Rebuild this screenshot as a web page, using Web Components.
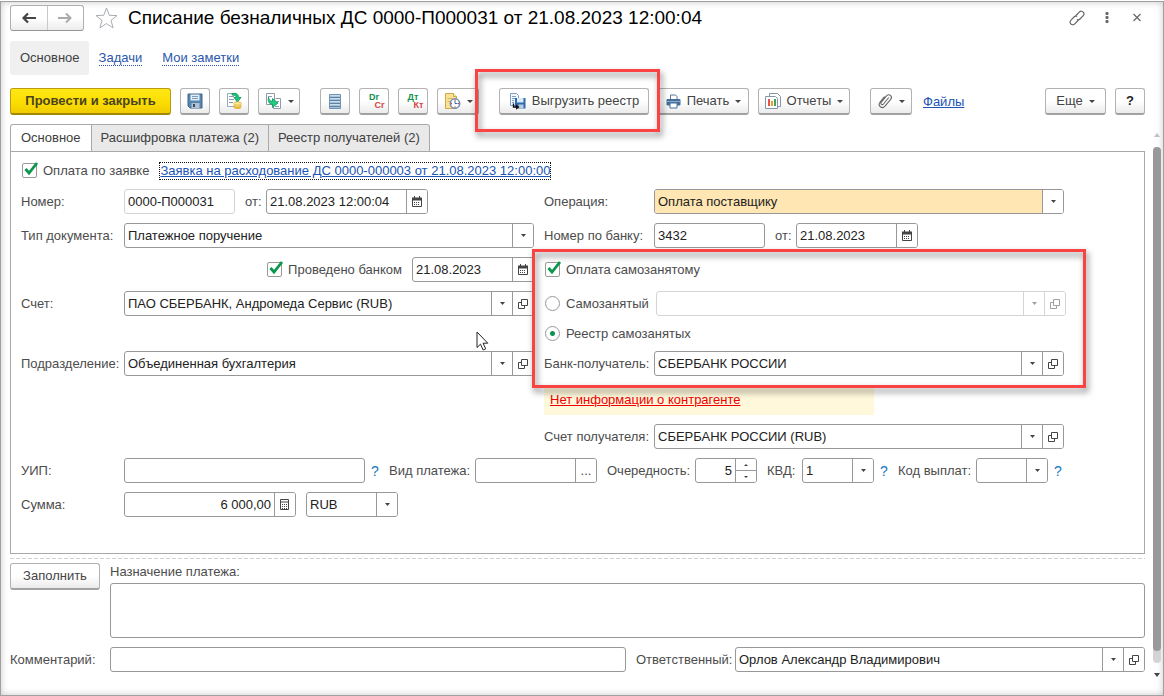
<!DOCTYPE html>
<html lang="ru">
<head>
<meta charset="utf-8">
<title>Списание безналичных ДС</title>
<style>
body{margin:0;font:13px/16px "Liberation Sans",Arial,sans-serif;color:#4c4c4c;background:#fff}
</style>
</head>
<body>
<doc-window></doc-window>

<template id="t-doc-window">
<style>
:host{display:flex;flex-direction:column;box-sizing:border-box;min-height:100vh;border-top:1px solid #fff}
.win{flex:1;display:flex;flex-direction:column;border:1px solid #a0a0a0;box-shadow:inset 0 0 7px rgba(0,0,0,.22);padding:3px 2px 0 9px}
.body{display:flex;gap:8px;margin-top:9px;flex:1}
.main{flex:1;min-width:0}
doc-header,nav-links,command-bar{margin-right:16px}
nav-links{margin-top:10px}
command-bar{margin-top:13px}
</style>
<div class="win">
<doc-header></doc-header>
<nav-links></nav-links>
<command-bar></command-bar>
<div class="body">
<div class="main"><tab-strip></tab-strip><payment-form></payment-form><doc-footer></doc-footer></div>
<scroll-rail></scroll-rail>
</div>
</div>
</template>

<template id="t-doc-header">
<style>
:host{display:flex;align-items:center;height:26px}
.nav{display:flex;box-sizing:border-box;width:74px;height:26px;border:1px solid #b0b0b0;border-bottom-color:#959595;border-radius:3px;background:linear-gradient(#fff 50%,#ececec)}
.nav button{flex:1;border:0;background:none;padding:0;display:flex;align-items:center;justify-content:center}
.nav button+button{border-left:1px solid #c8c8c8}
.star{margin:0 9px 0 10px;width:25px;height:25px}
.star svg,.tools svg{display:block}
h1{margin:0;flex:1;font-size:19px;line-height:24px;font-weight:400;color:#000;white-space:nowrap}
.tools{display:flex;align-items:center;gap:14px}
button.t{border:0;background:none;padding:0;width:16px;height:20px}
</style>
<div class="nav">
<button aria-label="Назад"><svg width="16" height="12" viewBox="0 0 16 12"><path d="M7 1.500 2.500 6 7 10.500M2.500 6H15" fill="none" stroke="#454545" stroke-width="2.200"/></svg></button>
<button aria-label="Вперед"><svg width="16" height="12" viewBox="0 0 16 12"><path d="M9 1.500 13.500 6 9 10.500M13.500 6H1" fill="none" stroke="#ababab" stroke-width="2"/></svg></button>
</div>
<div class="star"><svg width="25" height="25" viewBox="0 0 25 25"><path d="M12.500 2l2.800 7.300 7.700.3-6 4.800 2.100 7.500-6.600-4.300-6.600 4.300 2.100-7.500-6-4.800 7.700-.3z" fill="#fff" stroke="#a8adb3" stroke-width="1"/></svg></div>
<h1>Списание безналичных ДС 0000-П000031 от 21.08.2023 12:00:04</h1>
<div class="tools">
<button class="t" aria-label="Ссылка"><svg width="16" height="18" viewBox="0 0 16 18"><g fill="none" stroke="#666" stroke-width="1.200" stroke-linecap="round"><path d="M7 6.500l3.200-3.300c1.400-1.400 3-1.200 4 0 1 1.100.9 2.600-.2 3.700l-3 3.100c-.8.8-1.700 1-2.600.7"/><path d="M9 11.500l-3.200 3.300c-1.400 1.400-3 1.200-4 0-1-1.100-.9-2.600.2-3.700l3-3.100c.8-.8 1.700-1 2.600-.7"/></g></svg></button>
<button class="t" aria-label="Меню"><svg width="16" height="18" viewBox="0 0 16 18"><g fill="#666"><rect x="6.500" y="3" width="3" height="3" rx="1"/><rect x="6.500" y="7" width="3" height="3" rx="1"/><rect x="6.500" y="11" width="3" height="3" rx="1"/></g></svg></button>
<button class="t" aria-label="Закрыть"><svg width="16" height="18" viewBox="0 0 16 18"><path d="M4.500 5l7 7m0-7l-7 7" stroke="#666" stroke-width="1.200"/></svg></button>
</div>
</template>

<template id="t-nav-links">
<style>
:host{display:flex;align-items:center;height:34px}
.cur{box-sizing:border-box;height:34px;padding:9px 9px 9px 10px;background:#f0f0f0;border-radius:3px;color:#404040}
a{color:#2a57ac;text-decoration:none;border-bottom:1px dotted #2a57ac;line-height:14px;margin-left:10px}
a+a{margin-left:20px}
</style>
<span class="cur">Основное</span><a href="#tasks">Задачи</a><a href="#notes">Мои заметки</a>
</template>

<template id="t-command-bar">
<style>
:host{display:flex;align-items:center;gap:9px;height:27px}
.sp{width:2px;flex:none}
.grow{flex:1}
svg{display:block}
.hl{position:relative}
a{color:#2055b5;text-decoration:underline;margin-left:2px}
callout-frame{inset:-19px -11px -17px -24px}
</style>
<cmd-button primary wide="161">Провести и закрыть</cmd-button>
<cmd-button wide="30" label="Записать"><svg width="16" height="16" viewBox="0 0 16 16"><path d="M1 1h14v14H3l-2-2z" fill="#5585b3" stroke="#3e6489"/><path d="M3.500 1.500h9v6h-9z" fill="#e4edf5"/><path d="M5 3.500h6M5 5.500h6" stroke="#7c9cbc"/><path d="M4.500 10h8v5h-8z" fill="#b4c2cf"/><path d="M6 11h2v3H6z" fill="#2f4c69"/></svg></cmd-button>
<cmd-button wide="30" label="Провести"><svg width="16" height="18" viewBox="0 0 16 18"><path d="M1.500 1.500h9v13h-9z" fill="#fff" stroke="#9ba9b6"/><path d="M3 4.500h5M3 7.500h5M3 10.500h4" stroke="#8499ab"/><path d="M6 1.500c4-.7 6.500.5 6.800 4H15L11.500 10 8 5.500h2.200C10 4 9 3 6 3z" fill="#1fc77c" stroke="#109358" stroke-width=".8"/><ellipse cx="11.500" cy="15" rx="3.800" ry="2" fill="#e8b93c"/><ellipse cx="11.500" cy="13.500" rx="3.800" ry="1.700" fill="#f8df76" stroke="#d9a62e" stroke-width=".7"/><ellipse cx="11.500" cy="11.500" rx="3.800" ry="1.700" fill="#fdeb94" stroke="#d9a62e" stroke-width=".7"/></svg></cmd-button>
<cmd-button wide="42" drop label="Создать на основании"><svg width="17" height="18" viewBox="0 0 17 18"><path d="M1.500 1.500h8v11h-8zM10.500 6.500h5v10h-7v-4" fill="#fff" stroke="#8d9baa"/><path d="M3 4.500h4M10 14.500h4M12 9.500h2" stroke="#8da0b2"/><path d="M3.500 5c.3 3 1.500 4.200 4 4.200V6.500L13 11l-5.500 4.500v-3C4.500 12.500 2.500 9.500 3.500 5z" fill="#22c980" stroke="#0c9357" stroke-width=".8"/></svg></cmd-button>
<i class="sp"></i>
<cmd-button wide="30" label="Реестр"><svg width="12" height="15" viewBox="0 0 12 15"><path d="M.5.500h11v14H.5z" fill="#a9c4da" stroke="#6f93b1"/><path d="M1 3.500h10M1 6.500h10M1 9.500h10M1 12.500h10" stroke="#5c82a3"/><path d="M1 1.500h10M1 4.500h10M1 7.500h10M1 10.500h10" stroke="#c9dcea"/></svg></cmd-button>
<cmd-button wide="30" label="Проводки"><pair-glyph a="Dr" b="Cr"></pair-glyph></cmd-button>
<cmd-button wide="30" label="Движения"><pair-glyph a="Дт" b="Кт"></pair-glyph></cmd-button>
<cmd-button wide="42" drop label="История"><svg width="17" height="16" viewBox="0 0 17 16"><path d="M1.500.5h8l3 3v12h-11z" fill="#fbe294" stroke="#cfa748"/><path d="M9.500.5v3h3" fill="#fff5cf" stroke="#cfa748"/><path d="M3.500 5.500h5M3.500 8.500h3" stroke="#d8b45a"/><circle cx="11" cy="10.500" r="4.700" fill="#fff" stroke="#668fbd" stroke-width="1.500"/><path d="M11 7.500v3h2.500" fill="none" stroke="#3b6ba2"/><path d="M11 6.500v1M11 13.500v1M7 10.500h1M14 10.500h1" stroke="#e03c3c" stroke-width="1.300"/></svg></cmd-button>
<i class="sp"></i>
<div class="hl">
<cmd-button wide="150"><svg slot="icon" width="17" height="17" viewBox="0 0 17 17"><path d="M1.500.500h6l2 2v10h-8z" fill="#f3f8fd" stroke="#7f9dc2"/><path d="M3 3.500h4M3 5.500h3M3 7.500h2M3 9.500h2" stroke="#7f9dc2"/><path d="M6 5h10.500v10.500H8L6 14z" fill="#2e69ac"/><path d="M8 5h6.500v4.500H8z" fill="#d9ebfa"/><path d="M9.500 11.500h5v4h-5z" fill="#b8cbdd"/><path d="M4.500 10.500v3.500h3" fill="none" stroke="#111" stroke-width="1.400"/><path d="M7 11.500l3.500 2.500L7 16.700z" fill="#111"/></svg>Выгрузить реестр</cmd-button>
<callout-frame></callout-frame>
</div>
<cmd-button wide="91" drop><svg slot="icon" width="15" height="15" viewBox="0 0 15 15"><path d="M4.500 5V1h5l1.500 1.500V5" fill="#fff" stroke="#5a7896"/><rect x=".5" y="5" width="14" height="6.500" rx="1" fill="#446f9b"/><path d="M1 7.500h13" stroke="#89abc9"/><path d="M4 9h7v5H4z" fill="#fff" stroke="#446f9b"/></svg>Печать</cmd-button>
<cmd-button wide="92" drop><svg slot="icon" width="16" height="17" viewBox="0 0 16 17"><path d="M4.500.500h8l3 3v10h-11z" fill="#fff" stroke="#8397a9"/><path d="M.5 3.500h10l2 2v10H.5z" fill="#fff" stroke="#8397a9"/><path d="M3 6h2v7H3z" fill="#e35548"/><path d="M6 8h2v5H6z" fill="#e79c35"/><path d="M9 6h2v7H9z" fill="#3fa358"/></svg>Отчеты</cmd-button>
<i class="sp"></i>
<cmd-button wide="42" drop label="Присоединенные файлы"><svg width="15" height="16" viewBox="0 0 15 16"><path d="M10.800 4.500L5.500 11c-.6.700-1.600.7-2.200.2-.6-.6-.6-1.400 0-2.100L8.500 2.800c1-1.200 2.700-1.400 3.900-.4 1.200 1 1.300 2.700.3 3.900L7 13.200c-1.300 1.500-3.300 1.600-4.600.6C1 12.600.9 10.500 2.100 9L6.600 3.700" fill="none" stroke="#666" stroke-width="1.100"/></svg></cmd-button>
<a href="#files">Файлы</a>
<i class="grow"></i>
<cmd-button wide="61" drop>Еще</cmd-button>
<cmd-button wide="30" label="Справка" strong>?</cmd-button>
</template>

<template id="t-pair-glyph">
<style>
:host{display:flex;flex-direction:column;width:21px;font:700 9px/8px "Liberation Sans",Arial,sans-serif}
.a{color:#12924f}
.b{align-self:flex-end;color:#d64545}
</style>
<span class="a"></span><span class="b"></span>
</template>

<template id="t-cmd-button">
<style>
:host{display:block;flex:none}
button{font:inherit;color:#444;box-sizing:border-box;width:100%;height:27px;padding:0;display:flex;align-items:center;justify-content:center;gap:6px;border:1px solid #b3b3b3;border-bottom:2px solid #a2a2a2;border-radius:3px;background:linear-gradient(#fff 50%,#ebebeb);white-space:nowrap}
:host([primary]) button{font-weight:700;color:#4a4320;background:linear-gradient(#ffe817,#fbdc00 60%,#efcb00);border-color:#b89d10;border-bottom-color:#a08800}
:host([strong]) button{font-weight:700;color:#222}
::slotted(svg){display:block}
.d{display:none;border:3px solid transparent;border-top-color:#444;border-bottom:0}
:host([drop]) .d{display:block}
</style>
<button><slot name="icon"></slot><slot></slot><span class="d"></span></button>
</template>

<template id="t-callout-frame">
<style>
:host{position:absolute;pointer-events:none;border:3px solid #fc4343;filter:drop-shadow(2px 4px 3px rgba(0,0,0,.5))}
</style>
</template>

<template id="t-tab-strip">
<style>
:host{display:flex;height:28px;position:relative;margin-bottom:-1px}
button{font:inherit;color:#404040;box-sizing:border-box;border:1px solid #a9a9a9;border-left-width:0;background:#e9e9e9;padding:0 9px;height:28px;white-space:nowrap}
button:first-of-type{background:#fff;border-left-width:1px;border-bottom-color:#fff;border-radius:3px 0 0 0;padding:0 10px}
button:last-of-type{border-radius:0 3px 0 0}
</style>
<button>Основное</button><button>Расшифровка платежа (2)</button><button>Реестр получателей (2)</button>
</template>

<template id="t-form-field">
<style>
:host{display:flex;align-items:center;min-width:0;height:25px}
label{flex:none;width:var(--lw,auto);white-space:nowrap;color:#4c4c4c}
.box{flex:1;min-width:0;display:grid;grid-template-columns:minmax(0,1fr);grid-auto-flow:column;box-sizing:border-box;height:25px;border:1px solid #989898;border-radius:3px;background:#fff;overflow:hidden}
input,select{grid-row:1;grid-column:1;box-sizing:border-box;appearance:none;font:inherit;color:#222;opacity:1;border:0;outline:0;background:var(--bg,transparent);padding:0 3px;margin:0;width:100%;height:23px;border-radius:0;min-width:0}
.num input{text-align:right}
.pick select{grid-column:1/3;padding-right:24px}
.cell{grid-row:1;box-sizing:border-box;width:21px;height:23px;border:0;border-left:1px solid #989898;background:#fff;padding:0;display:flex;align-items:center;justify-content:center;color:#444;font:inherit}
.pick .arrow{grid-column:2;pointer-events:none}
.cell svg{display:block}
.spin{flex-direction:column}
.spin i{flex:1;width:100%;display:flex;align-items:center;justify-content:center}
.spin i+i{border-top:1px solid #989898}
:host([disabled]) .box{border-color:#d4d4d4}
:host([disabled]) .cell{border-color:#d4d4d4;color:#a0a0a0}
:host([pale]) .box{border-color:#d4d4d4}
</style>
<label for="f"></label><div class="box"></div>
</template>

<template id="t-check-option">
<style>
:host{display:flex;align-items:center;height:25px}
label{white-space:nowrap;margin-left:6px}
.c{position:relative;width:15px;height:15px;flex:none}
input{appearance:none;display:block;box-sizing:border-box;width:15px;height:15px;margin:0;border:1px solid #999;border-radius:2px;background:#fff}
svg{position:absolute;left:1px;top:-2px;pointer-events:none}
</style>
<span class="c"><input type="checkbox" id="c" checked><svg width="16" height="16" viewBox="0 0 16 16"><path d="M2.500 8l3.500 4 8-10" fill="none" stroke="#0a964c" stroke-width="2.800"/></svg></span><label for="c"><slot></slot></label>
</template>

<template id="t-payment-form">
<style>
:host{display:block;position:relative;box-sizing:border-box;border:1px solid #a9a9a9;padding:6px 10px 35px;min-height:403px}
.cols{display:grid;grid-template-columns:minmax(0,513fr) minmax(0,522fr);column-gap:10px;max-width:1045px}
.col,.self{display:flex;flex-direction:column;gap:9px}
.top{display:flex;align-items:center;gap:11px;height:25px;margin-bottom:6px;padding-left:1px}
.top a{color:#2055b5;outline:1px dotted #111;line-height:16px}
.row{display:flex;align-items:center;gap:10px}
.l{--lw:103px}
.r{--lw:110px;margin-right:2px}
.ot{--lw:21px}
.end{justify-content:flex-end}
.self{position:relative}
.self .r{margin-top:-4px}
.self check-option{padding-left:1px}
callout-frame{inset:-8px -20px -12px -12px}
.rad{display:flex;align-items:center;gap:6px;padding-left:1px;height:25px}
.rad+.rad{margin-top:-4px}
.rad form-field{flex:1}
.rad label{width:84px;white-space:nowrap}
.rad label.w{width:auto}
input[type=radio]{appearance:none;box-sizing:border-box;width:15px;height:15px;margin:0;border:1px solid #999;border-radius:50%;background:#fff;flex:none}
input[type=radio]:checked{background:radial-gradient(circle,#0a964c 2px,#fff 3px)}
.note{height:28px;width:330px;margin-top:2px;background:#fff8db;box-sizing:border-box;padding:5px 6px}
.note a{color:#f00000}
.gap{margin-top:26px}
.bottom{display:flex;flex-direction:column;gap:9px;margin-top:9px}
.q{border:0;background:none;padding:0;font:14px/16px "Liberation Sans",Arial,sans-serif;color:#1478be;width:8px;margin-left:-4px}
.cur{position:absolute;left:465px;top:179px}
</style>
<div class="top"><check-option>Оплата по заявке</check-option><a href="#request">Заявка на расходование ДС 0000-000003 от 21.08.2023 12:00:00</a></div>
<div class="cols">
<div class="col">
<div class="row"><form-field class="l" style="width:214px" label="Номер:" value="0000-П000031" pale></form-field><form-field class="ot" style="width:183px" label="от:" value="21.08.2023 12:00:04" parts="date"></form-field></div>
<form-field class="l" label="Тип документа:" value="Платежное поручение" parts="arrow"></form-field>
<div class="row end"><check-option>Проведено банком</check-option><form-field style="width:122px" name="Дата проведения" value="21.08.2023" parts="date"></form-field></div>
<form-field class="l" label="Счет:" value="ПАО СБЕРБАНК, Андромеда Сервис (RUB)" parts="arrow open"></form-field>
<form-field class="l gap" label="Подразделение:" value="Объединенная бухгалтерия" parts="arrow open"></form-field>
</div>
<div class="col">
<form-field class="r" style="--bg:#ffe6b2" label="Операция:" value="Оплата поставщику" parts="arrow"></form-field>
<div class="row"><form-field class="r" style="width:221px;margin:0" label="Номер по банку:" value="3432"></form-field><form-field class="ot" style="width:143px" label="от:" value="21.08.2023" parts="date"></form-field></div>
<div class="self">
<check-option>Оплата самозанятому</check-option>
<div class="rad"><input type="radio" name="who" id="one"><label for="one">Самозанятый</label><form-field name="Самозанятый" value="" parts="arrow open" disabled></form-field></div>
<div class="rad"><input type="radio" name="who" id="list" checked><label class="w" for="list">Реестр самозанятых</label></div>
<form-field class="r" label="Банк-получатель:" value="СБЕРБАНК РОССИИ" parts="arrow open"></form-field>
<callout-frame></callout-frame>
</div>
<div class="note"><a href="#partner">Нет информации о контрагенте</a></div>
<form-field class="r" label="Счет получателя:" value="СБЕРБАНК РОССИИ (RUB)" parts="arrow open"></form-field>
</div>
</div>
<div class="bottom">
<div class="row"><form-field class="l" style="width:344px" label="УИП:" value=""></form-field><button class="q">?</button><form-field style="--lw:86px;width:208px" label="Вид платежа:" value="" parts="dots"></form-field><form-field style="--lw:88px;width:150px" label="Очередность:" value="5" num parts="spin"></form-field><form-field style="--lw:35px;width:107px" label="КВД:" value="1" parts="arrow"></form-field><button class="q">?</button><form-field style="--lw:78px;width:150px" label="Код выплат:" value="" parts="arrow"></form-field><button class="q">?</button></div>
<div class="row"><form-field class="l" style="width:275px" label="Сумма:" value="6 000,00" num parts="calc"></form-field><form-field style="width:92px" name="Валюта" value="RUB" parts="arrow"></form-field></div>
</div>
<svg class="cur" width="13" height="20" viewBox="0 0 13 20"><path d="M1 1v15.500l3.500-3.300 2.600 5.800 2.600-1.200-2.600-5.600h4.700z" fill="#fff" stroke="#222" stroke-width="1"/></svg>
</template>

<template id="t-doc-footer">
<style>
:host{display:block;margin-top:4px}
.dash{height:1px;background:repeating-linear-gradient(90deg,#d0d0d0 0 4px,#fff 4px 6px)}
.grid{display:grid;grid-template-columns:90px minmax(0,1fr);column-gap:10px;margin-top:4px;align-items:start}
label{display:block;line-height:16px;margin:1px 0 3px}
textarea{display:block;box-sizing:border-box;width:100%;height:55px;border:1px solid #989898;border-radius:3px;resize:none;font:inherit;background:#fff}
.row{display:flex;gap:10px;margin-top:9px}
.a{--lw:100px;flex:616}
.b{--lw:99px;flex:509}
</style>
<div class="dash"></div>
<div class="grid"><cmd-button>Заполнить</cmd-button><div><label for="p">Назначение платежа:</label><textarea id="p"></textarea></div></div>
<div class="row"><form-field class="a" label="Комментарий:" value=""></form-field><form-field class="b" label="Ответственный:" value="Орлов Александр Владимирович" parts="arrow open"></form-field></div>
</template>

<template id="t-scroll-rail">
<style>
:host{display:flex;flex-direction:column;align-items:center;width:8px;margin:9px 0 18px}
.up,.dn{border:3px solid transparent;border-top:0;border-bottom:4px solid #c0c0c0}
.dn{border-top:4px solid #444;border-bottom:0}
.track{flex:1;width:8px;margin:10px 0 10px;background:#d4d4d4;border-radius:4px;box-sizing:border-box;padding-bottom:12px;display:flex}
.thumb{flex:1;background:#999;border-radius:4px}
</style>
<i class="up"></i><div class="track"><div class="thumb"></div></div><i class="dn"></i>
</template>

<script>
const cells = {
  arrow: '<span class="cell arrow"><svg width="5" height="3" viewBox="0 0 5 3"><path d="M0 0h5L2.500 3z" fill="currentColor"/></svg></span>',
  open: '<button class="cell" aria-label="Открыть"><svg width="10" height="10" viewBox="0 0 10 10" fill="none" stroke="currentColor"><path d="M3.500.500h6v6h-6zM3.500 3.500h-3v6h6v-3"/></svg></button>',
  date: '<button class="cell" aria-label="Выбрать дату"><svg width="10" height="11" viewBox="0 0 10 11"><path d="M.5 2.500h9v8h-9z" fill="#fff" stroke="currentColor"/><path d="M0 1.500h10v3H0zM2 0h1v2H2zM7 0h1v2H7z" fill="currentColor"/><path d="M2 6.500h6M2 8.500h6" stroke="currentColor" stroke-dasharray="1"/></svg></button>',
  calc: '<button class="cell" aria-label="Калькулятор"><svg width="10" height="12" viewBox="0 0 10 12"><path d="M.5.500h8v10h-8zM.5 3h8" fill="none" stroke="currentColor"/><path d="M2 5.500h6M2 7.500h6M2 9.500h6" stroke="currentColor" stroke-dasharray="1"/></svg></button>',
  dots: '<button class="cell" aria-label="Выбрать">...</button>',
  spin: '<span class="cell spin"><i><svg width="4" height="2" viewBox="0 0 4 2"><path d="M0 2h4L2 0z" fill="currentColor"/></svg></i><i><svg width="4" height="2" viewBox="0 0 4 2"><path d="M0 0h4L2 2z" fill="currentColor"/></svg></i></span>'
};

function define(name, setup) {
  customElements.define(name, class extends HTMLElement {
    constructor() {
      super();
      this.attachShadow({ mode: 'open' }).append(
        document.getElementById('t-' + name).content.cloneNode(true));
    }
    connectedCallback() {
      if (setup && !this.ready) setup(this, this.shadowRoot);
      this.ready = true;
    }
  });
}

define('callout-frame');
define('pair-glyph', (el, root) => {
  root.querySelector('.a').textContent = el.getAttribute('a');
  root.querySelector('.b').textContent = el.getAttribute('b');
});
define('cmd-button', (el, root) => {
  if (el.hasAttribute('wide')) el.style.width = el.getAttribute('wide') + 'px';
  if (el.hasAttribute('label')) root.querySelector('button').setAttribute('aria-label', el.getAttribute('label'));
});
define('check-option');
define('form-field', (el, root) => {
  const parts = (el.getAttribute('parts') || '').split(' ').filter(Boolean);
  const value = el.getAttribute('value') || '';
  const label = root.querySelector('label');
  const box = root.querySelector('.box');
  const pick = parts.includes('arrow');
  const control = document.createElement(pick ? 'select' : 'input');
  control.id = 'f';
  if (el.hasAttribute('label')) label.textContent = el.getAttribute('label');
  else {
    label.remove();
    control.setAttribute('aria-label', el.getAttribute('name'));
  }
  if (pick) {
    box.classList.add('pick');
    control.add(new Option(value, value));
  } else {
    control.type = 'text';
    control.value = value;
  }
  control.disabled = el.hasAttribute('disabled');
  if (el.hasAttribute('num')) box.classList.add('num');
  box.innerHTML = parts.map(p => cells[p]).join('');
  box.prepend(control);
});
define('scroll-rail');
define('doc-header');
define('nav-links');
define('command-bar');
define('tab-strip');
define('payment-form');
define('doc-footer');
define('doc-window');
</script>
</body>
</html>
